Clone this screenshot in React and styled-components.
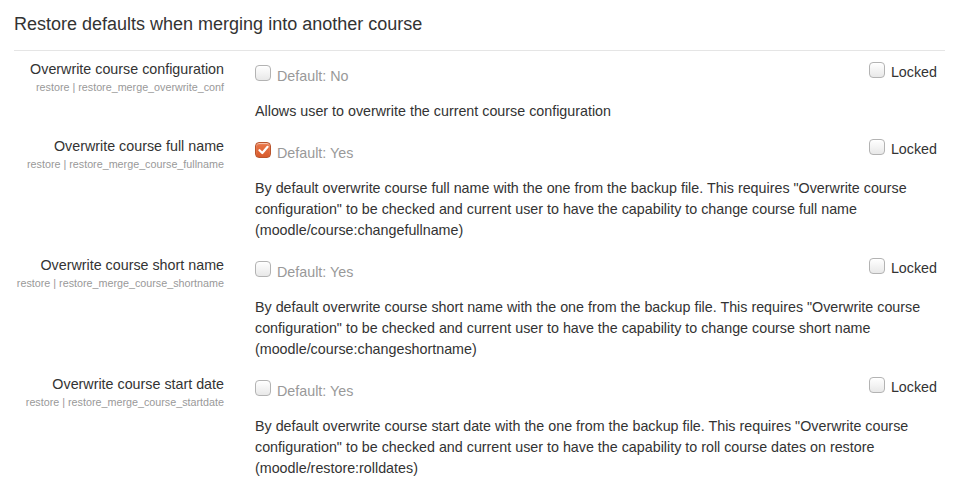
import React from 'react'
import styled, { createGlobalStyle } from 'styled-components'

const GlobalStyle = createGlobalStyle`
    body {
        margin: 0;
        background: #fff;
        font-family: "Liberation Sans", Arial, sans-serif;
        color: #333;
    }
`

const Page = styled.div`
    padding: 0 12px 0 14px;
`

const Heading = styled.h3`
    margin: 0;
    padding: 13px 0 14px;
    font-size: 18px;
    line-height: 23px;
    font-weight: normal;
    color: #333;
    border-bottom: 1px solid #e5e5e5;
`

const List = styled.div`
    padding-top: 9px;
`

const Row = styled.div`
    display: grid;
    grid-template-columns: 210px 1fr;
    column-gap: 31px;
    margin-bottom: 15px;
`

const LabelCol = styled.div`
    text-align: right;
`

const Label = styled.div`
    font-size: 14.3px;
    line-height: 20px;
    margin-top: -1px;
`

const ShortName = styled.div`
    font-size: 10.75px;
    line-height: 16px;
    color: #999;
`

const Content = styled.div`
    padding-right: 8px;
`

const TopLine = styled.div`
    display: flex;
    justify-content: space-between;
    align-items: flex-start;
    height: 41px;
`

const Check = styled.label`
    display: flex;
    align-items: flex-start;
    gap: 6px;
    font-size: 14.3px;
    line-height: 20px;
    color: ${p => (p.$muted ? '#999' : '#333')};
    margin-top: ${p => p.$offset}px;
`

const Box = styled.span`
    flex: none;
    width: 14px;
    height: 14px;
    margin-top: ${p => p.$drop}px;
    border-radius: 4px;
    display: flex;
    align-items: center;
    justify-content: center;
    border: 1px solid ${p => (p.$checked ? '#b9542c' : '#b3b3b3')};
    background: ${p =>
        p.$checked
            ? 'linear-gradient(#ea784a, #d85b2c)'
            : 'linear-gradient(#ffffff, #e8e8e8)'};
    box-shadow: inset 0 1px 1px rgba(255, 255, 255, 0.6);
`

const Desc = styled.div`
    font-size: 14.3px;
    line-height: 21px;
`

const Checkbox = ({ checked, drop }) => (
    <Box $checked={checked} $drop={drop}>
        {checked && (
            <svg width="11" height="10" viewBox="0 0 11 10">
                <path
                    d="M1.5 5.2 L4.3 8 L9.6 1.8"
                    fill="none"
                    stroke="#fff"
                    strokeWidth="2.2"
                    strokeLinecap="round"
                    strokeLinejoin="round"
                />
            </svg>
        )}
    </Box>
)

const settings = [
    {
        label: 'Overwrite course configuration',
        name: 'restore | restore_merge_overwrite_conf',
        checked: false,
        def: 'No',
        desc: ['Allows user to overwrite the current course configuration'],
    },
    {
        label: 'Overwrite course full name',
        name: 'restore | restore_merge_course_fullname',
        checked: true,
        def: 'Yes',
        desc: [
            'By default overwrite course full name with the one from the backup file. This requires "Overwrite course',
            'configuration" to be checked and current user to have the capability to change course full name',
            '(moodle/course:changefullname)',
        ],
    },
    {
        label: 'Overwrite course short name',
        name: 'restore | restore_merge_course_shortname',
        checked: false,
        def: 'Yes',
        desc: [
            'By default overwrite course short name with the one from the backup file. This requires "Overwrite course',
            'configuration" to be checked and current user to have the capability to change course short name',
            '(moodle/course:changeshortname)',
        ],
    },
    {
        label: 'Overwrite course start date',
        name: 'restore | restore_merge_course_startdate',
        checked: false,
        def: 'Yes',
        desc: [
            'By default overwrite course start date with the one from the backup file. This requires "Overwrite course',
            'configuration" to be checked and current user to have the capability to roll course dates on restore',
            '(moodle/restore:rolldates)',
        ],
    },
]

export default function App() {
    return (
        <Page>
            <GlobalStyle />
            <Heading>Restore defaults when merging into another course</Heading>
            <List>
                {settings.map(s => (
                    <Row key={s.name}>
                        <LabelCol>
                            <Label>{s.label}</Label>
                            <ShortName>{s.name}</ShortName>
                        </LabelCol>
                        <Content>
                            <TopLine>
                                <Check $muted $offset={6}>
                                    <Checkbox checked={s.checked} drop={-1} />
                                    Default: {s.def}
                                </Check>
                                <Check $offset={2}>
                                    <Checkbox drop={0} />
                                    Locked
                                </Check>
                            </TopLine>
                            <Desc>
                                {s.desc.map((line, i) => (
                                    <div key={i}>{line}</div>
                                ))}
                            </Desc>
                        </Content>
                    </Row>
                ))}
            </List>
        </Page>
    )
}
